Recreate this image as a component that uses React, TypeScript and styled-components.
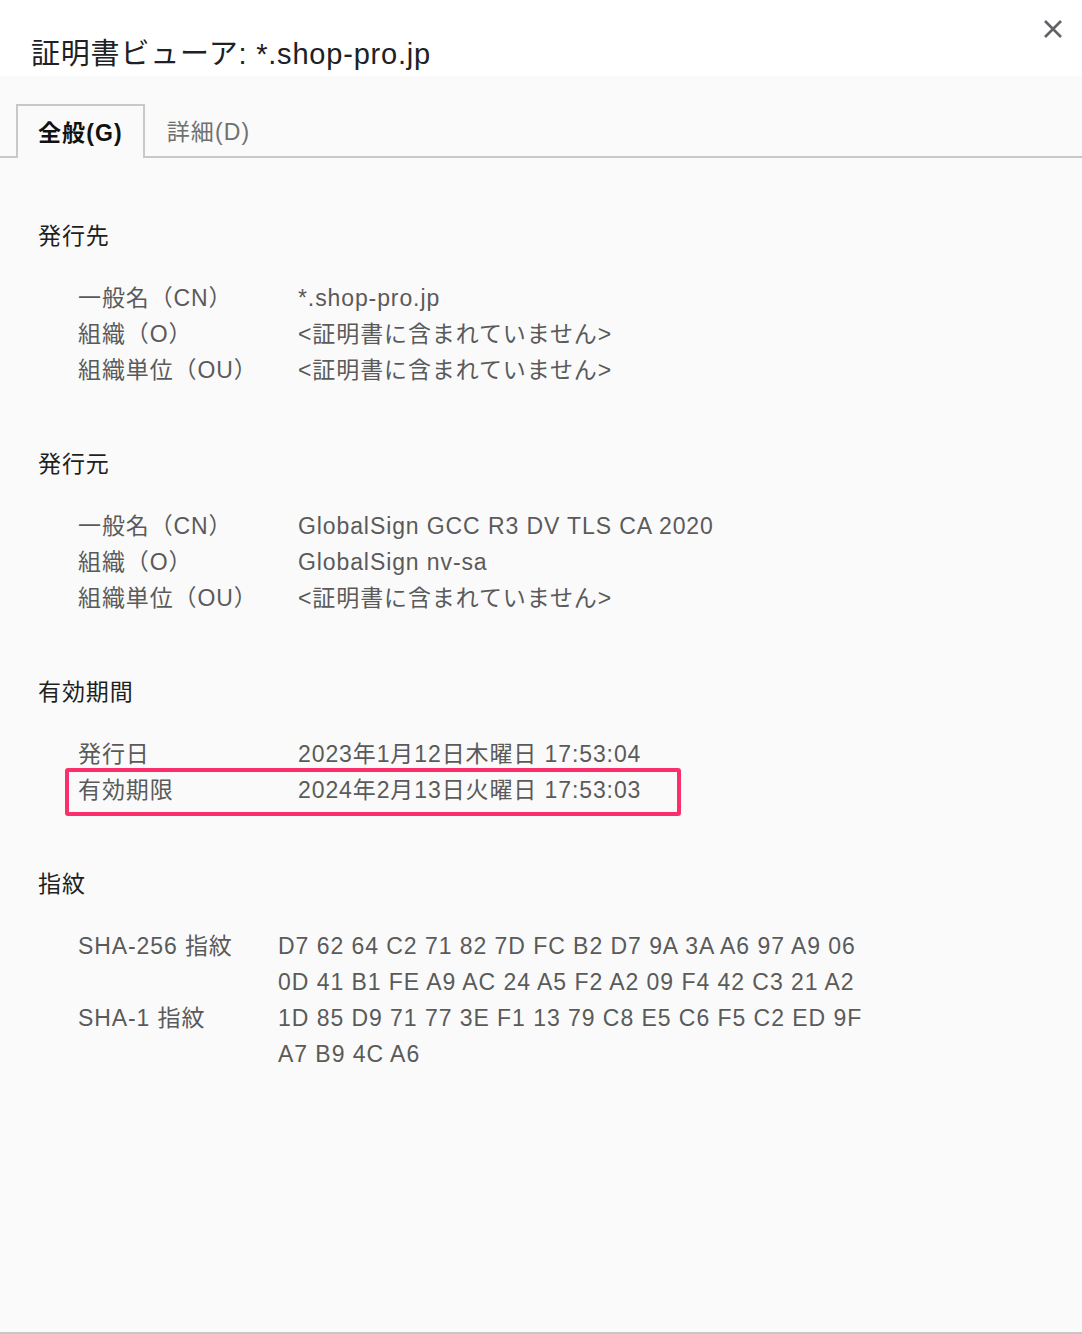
import React from 'react';
import styled, { createGlobalStyle } from 'styled-components';

const GlobalStyle = createGlobalStyle`
  html, body {
    margin: 0;
    padding: 0;
    background: #ffffff;
  }
  body {
    font-family: 'Liberation Sans', 'Noto Sans CJK JP', sans-serif;
  }
`;

const Dialog = styled.div`
  width: 1082px;
  height: 1334px;
  display: flex;
  flex-direction: column;
  overflow: hidden;
`;

const Header = styled.div`
  height: 76px;
  flex: none;
  display: flex;
  justify-content: space-between;
  align-items: flex-start;
  background: #ffffff;
  padding: 0 18px 0 31px;
  box-sizing: border-box;
`;

const Title = styled.h1`
  margin: 36px 0 0;
  font-size: 29px;
  line-height: 36px;
  font-weight: 400;
  letter-spacing: 0.8px;
  color: #202124;
`;

const CloseButton = styled.button`
  margin-top: 18px;
  width: 22px;
  height: 22px;
  padding: 0;
  border: none;
  background: none;
  display: flex;
  align-items: center;
  justify-content: center;
  cursor: pointer;
`;

const Body = styled.div`
  flex: 1;
  background: #fafafa;
  border-bottom: 2px solid #c6c6c6;
  display: flex;
  flex-direction: column;
`;

const TabBar = styled.div`
  margin-top: 28px;
  padding-left: 16px;
  display: flex;
  align-items: flex-end;
  border-bottom: 2px solid #c8c8c8;
`;

const Tab = styled.div<{ $active?: boolean }>`
  height: ${({ $active }) => ($active ? '54px' : '52px')};
  box-sizing: border-box;
  display: flex;
  align-items: center;
  padding: 0 20px 2px;
  font-size: 23px;
  letter-spacing: 1.1px;
  margin-bottom: ${({ $active }) => ($active ? '-2px' : '0')};
  border: 2px solid ${({ $active }) => ($active ? '#c8c8c8' : 'transparent')};
  border-bottom: none;
  background: ${({ $active }) => ($active ? '#fafafa' : 'transparent')};
  font-weight: ${({ $active }) => ($active ? 700 : 400)};
  color: ${({ $active }) => ($active ? '#111111' : '#707070')};
`;

const Content = styled.div`
  padding: 60px 0 0 38px;
  display: flex;
  flex-direction: column;
  gap: 58px;
`;

const Section = styled.section`
  display: flex;
  flex-direction: column;
  gap: 26px;
`;

const SectionTitle = styled.h2`
  margin: 0;
  font-size: 23px;
  line-height: 36px;
  font-weight: 400;
  letter-spacing: 0.9px;
  color: #1f1f1f;
`;

const Fields = styled.div`
  padding-left: 40px;
  display: flex;
  flex-direction: column;
`;

const Field = styled.div<{ $labelWidth: number; $highlight?: boolean }>`
  position: relative;
  display: grid;
  grid-template-columns: ${({ $labelWidth }) => $labelWidth}px 1fr;
  font-size: 23px;
  line-height: 36px;
  letter-spacing: 0.9px;
  color: #5a5a5a;

  ${({ $highlight }) =>
    $highlight &&
    `
    &::after {
      content: '';
      position: absolute;
      left: -13px;
      top: -4px;
      width: 616px;
      height: 48px;
      box-sizing: border-box;
      border: 4px solid #fb2f6c;
      border-radius: 3px;
    }
  `}
`;

const Label = styled.span`
  white-space: nowrap;
`;

const Value = styled.span`
  white-space: nowrap;
`;

const HexLine = styled.span`
  display: block;
  letter-spacing: 0.95px;
`;

type Row = { label: string; value: string; highlight?: boolean };

const subject: Row[] = [
  { label: '一般名（CN）', value: '*.shop-pro.jp' },
  { label: '組織（O）', value: '<証明書に含まれていません>' },
  { label: '組織単位（OU）', value: '<証明書に含まれていません>' },
];

const issuer: Row[] = [
  { label: '一般名（CN）', value: 'GlobalSign GCC R3 DV TLS CA 2020' },
  { label: '組織（O）', value: 'GlobalSign nv-sa' },
  { label: '組織単位（OU）', value: '<証明書に含まれていません>' },
];

const validity: Row[] = [
  { label: '発行日', value: '2023年1月12日木曜日 17:53:04' },
  { label: '有効期限', value: '2024年2月13日火曜日 17:53:03', highlight: true },
];

const fingerprints = [
  {
    label: 'SHA-256 指紋',
    lines: ['D7 62 64 C2 71 82 7D FC B2 D7 9A 3A A6 97 A9 06', '0D 41 B1 FE A9 AC 24 A5 F2 A2 09 F4 42 C3 21 A2'],
  },
  {
    label: 'SHA-1 指紋',
    lines: ['1D 85 D9 71 77 3E F1 13 79 C8 E5 C6 F5 C2 ED 9F', 'A7 B9 4C A6'],
  },
];

function FieldList({ rows }: { rows: Row[] }) {
  return (
    <Fields>
      {rows.map((r) => (
        <Field key={r.label} $labelWidth={220} $highlight={r.highlight}>
          <Label>{r.label}</Label>
          <Value>{r.value}</Value>
        </Field>
      ))}
    </Fields>
  );
}

export default function App() {
  return (
    <>
      <GlobalStyle />
      <Dialog>
        <Header>
          <Title>証明書ビューア: *.shop-pro.jp</Title>
          <CloseButton aria-label="閉じる">
            <svg width="20" height="20" viewBox="0 0 20 20">
              <path d="M2 2 L18 18 M18 2 L2 18" stroke="#5f6368" strokeWidth="2.6" strokeLinecap="butt" />
            </svg>
          </CloseButton>
        </Header>
        <Body>
          <TabBar>
            <Tab $active>全般(G)</Tab>
            <Tab>詳細(D)</Tab>
          </TabBar>
          <Content>
            <Section>
              <SectionTitle>発行先</SectionTitle>
              <FieldList rows={subject} />
            </Section>
            <Section>
              <SectionTitle>発行元</SectionTitle>
              <FieldList rows={issuer} />
            </Section>
            <Section>
              <SectionTitle>有効期間</SectionTitle>
              <FieldList rows={validity} />
            </Section>
            <Section>
              <SectionTitle>指紋</SectionTitle>
              <Fields>
                {fingerprints.map((f) => (
                  <Field key={f.label} $labelWidth={200}>
                    <Label>{f.label}</Label>
                    <Value>
                      {f.lines.map((l) => (
                        <HexLine key={l}>{l}</HexLine>
                      ))}
                    </Value>
                  </Field>
                ))}
              </Fields>
            </Section>
          </Content>
        </Body>
      </Dialog>
    </>
  );
}
